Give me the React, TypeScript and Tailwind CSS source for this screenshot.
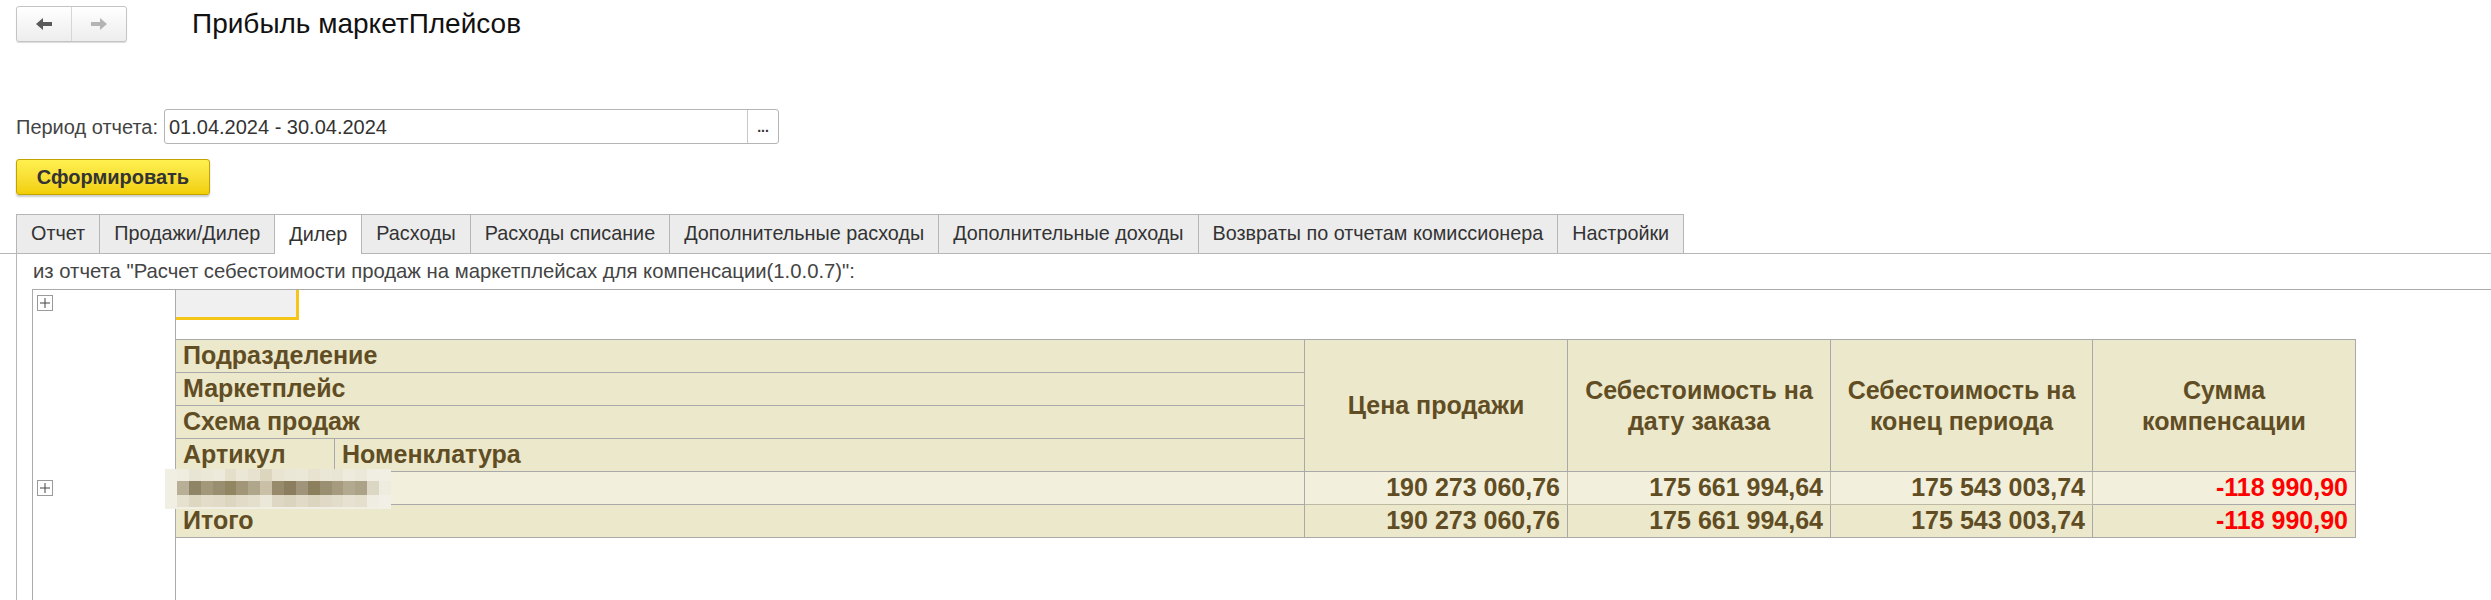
import React from "react";

const tabs = [
  "Отчет",
  "Продажи/Дилер",
  "Дилер",
  "Расходы",
  "Расходы списание",
  "Дополнительные расходы",
  "Дополнительные доходы",
  "Возвраты по отчетам комиссионера",
  "Настройки",
];

const blurTop = [
  "bg-[#efece0]", "bg-[#e9e5d4]", "bg-[#ece8d8]", "bg-[#eeeadb]", "bg-[#e4dfcb]", "bg-[#ebe7d7]",
  "bg-[#e7e2d0]", "bg-[#ddd6bf]", "bg-[#e9e4d2]", "bg-[#ebe7d6]", "bg-[#ece8d8]", "bg-[#e8e3d1]",
  "bg-[#ebe7d7]", "bg-[#e9e5d4]", "bg-[#eeeadc]", "bg-[#ece8d9]", "bg-[#f0ede2]", "bg-[#f1eee4]",
];
const blurMid = [
  "bg-[#b9af97]", "bg-[#8f8466]", "bg-[#a39879]", "bg-[#9a8e70]", "bg-[#928562]", "bg-[#a29678]",
  "bg-[#b0a68b]", "bg-[#c9c0a7]", "bg-[#978b6c]", "bg-[#8a7e5f]", "bg-[#a0947a]", "bg-[#8c7f5e]",
  "bg-[#9b8f71]", "bg-[#a69b7f]", "bg-[#b3a98f]", "bg-[#aca288]", "bg-[#dcd6c4]", "bg-[#eeebdf]",
];
const blurBot = [
  "bg-[#e6e1cf]", "bg-[#ddd7c2]", "bg-[#e2dcc9]", "bg-[#e0dac6]", "bg-[#dcd5bf]", "bg-[#e1dbc8]",
  "bg-[#e4dfcd]", "bg-[#ece8d9]", "bg-[#ddd7c3]", "bg-[#dad3be]", "bg-[#e0dac7]", "bg-[#dbd4bf]",
  "bg-[#dfd9c5]", "bg-[#e2dcca]", "bg-[#e6e1d0]", "bg-[#e4dfcd]", "bg-[#efece1]", "bg-[#f2efe6]",
];

function PlusBox() {
  return (
    <svg width="16" height="16" viewBox="0 0 16 16" className="block">
      <rect x="0.5" y="0.5" width="15" height="15" fill="#ffffff" stroke="#9a9a9a" />
      <line x1="8" y1="3" x2="8" y2="13" stroke="#444" strokeWidth="1" />
      <line x1="3" y1="8" x2="13" y2="8" stroke="#444" strokeWidth="1" />
    </svg>
  );
}

function Arrow({ dir, color }: { dir: "left" | "right"; color: string }) {
  return (
    <svg width="18" height="14" viewBox="0 0 18 14" className="block">
      {dir === "left" ? (
        <path d="M1 7 L8 1 L8 5 L17 5 L17 9 L8 9 L8 13 Z" fill={color} />
      ) : (
        <path d="M17 7 L10 1 L10 5 L1 5 L1 9 L10 9 L10 13 Z" fill={color} />
      )}
    </svg>
  );
}

export default function App() {
  const hdr = "bg-[#ebe8cb] border-b border-r border-[#a9a9a9] text-[#614d24] font-bold text-[25px]";
  return (
    <div className="w-[2491px] h-[600px] bg-white overflow-hidden font-['Liberation_Sans',Arial,sans-serif] text-[#333]">
      {/* Header */}
      <div className="flex items-center pt-[6px] pl-4">
        <div className="flex h-[36px] w-[111px] rounded-[3px] border border-[#c4c4c4] bg-gradient-to-b from-white to-[#ededed] shadow-[0_1px_1px_rgba(0,0,0,0.15)]">
          <div className="flex w-[55px] items-center justify-center border-r border-[#d6d6d6]">
            <Arrow dir="left" color="#5a5a5a" />
          </div>
          <div className="flex flex-1 items-center justify-center">
            <Arrow dir="right" color="#b4b4b4" />
          </div>
        </div>
        <div className="ml-[65px] text-[28px] leading-none text-[#111]">Прибыль маркетПлейсов</div>
      </div>

      {/* Period */}
      <div className="mt-[67px] flex items-center pl-4">
        <div className="w-[148px] text-[20px] text-[#444]">Период отчета:</div>
        <div className="flex h-[35px] w-[615px] rounded-[3px] border border-[#b5b5b5] bg-white">
          <div className="flex flex-1 items-center pl-[4px] text-[20px] text-[#333]">01.04.2024 - 30.04.2024</div>
          <div className="flex w-[31px] items-center justify-center border-l border-[#c8c8c8] text-[14px] font-bold leading-none text-[#333]">
            ...
          </div>
        </div>
      </div>

      {/* Button */}
      <div className="mt-[15px] pl-4">
        <div className="flex h-[36px] w-[194px] items-center justify-center rounded-[3px] border border-[#c2a400] bg-gradient-to-b from-[#fff04f] to-[#f1cf00] text-[20px] font-bold text-[#333] shadow-[0_2px_2px_rgba(0,0,0,0.2)]">
          Сформировать
        </div>
      </div>

      {/* Tabs */}
      <div className="mt-[19px] flex h-[40px] items-end border-b border-[#b6b6b6] pl-4">
        {tabs.map((t, i) => {
          const active = i === 2;
          return (
            <div
              key={t}
              className={
                active
                  ? "-mb-px flex h-[40px] items-center border-t border-l border-[#b6b6b6] bg-white px-[14px] text-[19.8px] text-[#333]"
                  : i === tabs.length - 1
                  ? "flex h-[39px] items-center border-t border-l border-r border-[#b6b6b6] bg-[#ececec] px-[14px] text-[19.8px] text-[#333]"
                  : "flex h-[39px] items-center border-t border-l border-[#b6b6b6] bg-[#ececec] px-[14px] text-[19.8px] text-[#333]"
              }
            >
              {t}
            </div>
          );
        })}
      </div>

      {/* Panel */}
      <div className="ml-4 h-[400px] border-l border-[#b6b6b6]">
        <div className="flex h-[35px] items-center pl-[16px] text-[20.3px] text-[#444]">
          из отчета "Расчет себестоимости продаж на маркетплейсах для компенсации(1.0.0.7)":
        </div>
        <div className="ml-[15px] flex h-[400px] border-t border-l border-[#ababab]">
          {/* gutter */}
          <div className="w-[143px] shrink-0 border-r border-[#ababab] pl-[4px]">
            <div className="mt-[5px]">
              <PlusBox />
            </div>
            <div className="mt-[169px]">
              <PlusBox />
            </div>
          </div>
          {/* content */}
          <div className="flex flex-col">
            <div className="h-[30px] w-[123px] border-r-[3px] border-b-[3px] border-[#f5c518] bg-[#f0f0f0]" />
            <div className="mt-[19px] grid w-[2180px] grid-cols-[159px_970px_263px_263px_262px_263px] grid-rows-[33px_33px_33px_33px_33px_33px] border-t border-[#a9a9a9]">
              <div className={`${hdr} col-span-2 flex items-center pl-[7px]`}>Подразделение</div>
              <div className={`${hdr} row-span-4 flex items-center justify-center text-center`}>Цена продажи</div>
              <div className={`${hdr} row-span-4 flex items-center justify-center text-center leading-[31px]`}>
                Себестоимость на<br />дату заказа
              </div>
              <div className={`${hdr} row-span-4 flex items-center justify-center text-center leading-[31px]`}>
                Себестоимость на<br />конец периода
              </div>
              <div className={`${hdr} row-span-4 flex items-center justify-center text-center leading-[31px]`}>
                Сумма<br />компенсации
              </div>
              <div className={`${hdr} col-span-2 flex items-center pl-[7px]`}>Маркетплейс</div>
              <div className={`${hdr} col-span-2 flex items-center pl-[7px]`}>Схема продаж</div>
              <div className={`${hdr} flex items-center pl-[7px]`}>Артикул</div>
              <div className={`${hdr} flex items-center pl-[7px]`}>Номенклатура</div>

              {/* data row */}
              <div className="relative col-span-2 border-b border-r border-[#a9a9a9] bg-[#f2f0dc]">
                <div className="absolute left-[-11px] top-[-3px] flex h-[40px] w-[226px] flex-col bg-[#f1eee4]">
                  <div className="flex h-[12px] pl-[12px]">
                    {blurTop.map((c, i) => (
                      <div key={i} className={`h-full w-[12px] ${c}`} />
                    ))}
                  </div>
                  <div className="flex h-[14px] pl-[12px]">
                    {blurMid.map((c, i) => (
                      <div key={i} className={`h-full w-[12px] ${c}`} />
                    ))}
                  </div>
                  <div className="flex h-[12px] pl-[12px]">
                    {blurBot.map((c, i) => (
                      <div key={i} className={`h-full w-[12px] ${c}`} />
                    ))}
                  </div>
                </div>
              </div>
              <div className="flex items-center justify-end border-b border-r border-[#bdb9a2] bg-[#f2f0dc] pr-[7px] text-[25px] font-bold text-[#614d24]">190 273 060,76</div>
              <div className="flex items-center justify-end border-b border-r border-[#bdb9a2] bg-[#f2f0dc] pr-[7px] text-[25px] font-bold text-[#614d24]">175 661 994,64</div>
              <div className="flex items-center justify-end border-b border-r border-[#bdb9a2] bg-[#f2f0dc] pr-[7px] text-[25px] font-bold text-[#614d24]">175 543 003,74</div>
              <div className="flex items-center justify-end border-b border-r border-[#a9a9a9] bg-[#f2f0dc] pr-[7px] text-[25px] font-bold text-[#ff0000]">-118 990,90</div>

              {/* total */}
              <div className={`${hdr} col-span-2 flex items-center pl-[7px]`}>Итого</div>
              <div className={`${hdr} flex items-center justify-end pr-[7px]`}>190 273 060,76</div>
              <div className={`${hdr} flex items-center justify-end pr-[7px]`}>175 661 994,64</div>
              <div className={`${hdr} flex items-center justify-end pr-[7px]`}>175 543 003,74</div>
              <div className="flex items-center justify-end border-b border-r border-[#a9a9a9] bg-[#ebe8cb] pr-[7px] text-[25px] font-bold text-[#ff0000]">-118 990,90</div>
            </div>
          </div>
        </div>
      </div>
    </div>
  );
}
